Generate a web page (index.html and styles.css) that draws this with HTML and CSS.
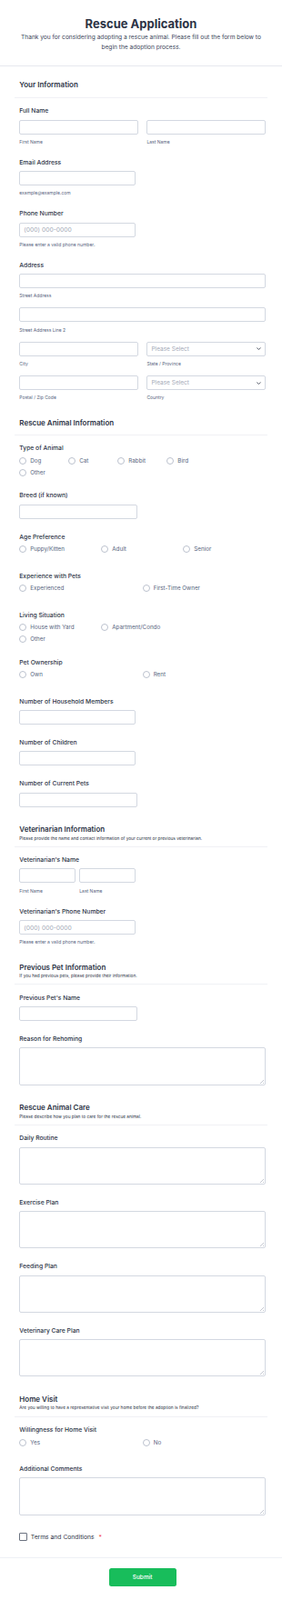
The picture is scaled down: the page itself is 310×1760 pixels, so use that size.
FILE: index.html
```html
<!DOCTYPE html>
<html lang="en">
<head>
    <meta charset="UTF-8">
    <meta name="viewport" content="width=device-width, initial-scale=1.0">
    <title>Rescue Application</title>
    <link rel="stylesheet" href="styles.css">
</head>
<body>
    <form class="form">
        <div class="header">
            <h1>Rescue Application</h1>
            <p>Thank you for considering adopting a rescue animal. Please fill out the form below to begin the adoption process.</p>
        </div>

        <!-- Your Information -->
        <div class="section first">
            <div class="section-head">
                <h2>Your Information</h2>
            </div>
            <div class="field">
                <label class="label">Full Name</label>
                <div class="row">
                    <div><input type="text"><span class="sublabel">First Name</span></div>
                    <div><input type="text"><span class="sublabel">Last Name</span></div>
                </div>
            </div>
            <div class="field">
                <label class="label">Email Address</label>
                <input type="text" class="w-md">
                <span class="sublabel">example@example.com</span>
            </div>
            <div class="field">
                <label class="label">Phone Number</label>
                <input type="text" class="w-md" placeholder="(000) 000-0000">
                <span class="sublabel">Please enter a valid phone number.</span>
            </div>
            <div class="field">
                <label class="label">Address</label>
                <div class="part"><input type="text"><span class="sublabel">Street Address</span></div>
                <div class="part"><input type="text"><span class="sublabel">Street Address Line 2</span></div>
                <div class="row part">
                    <div><input type="text"><span class="sublabel">City</span></div>
                    <div>
                        <div class="select-wrap">
                            <select><option>Please Select</option></select>
                            <svg class="chev" width="5" height="3" viewBox="0 0 5 3"><path d="M0.5 0.5 L2.5 2.5 L4.5 0.5" fill="none" stroke="#2c3345" stroke-width="0.8"/></svg>
                        </div>
                        <span class="sublabel">State / Province</span>
                    </div>
                </div>
                <div class="row">
                    <div><input type="text"><span class="sublabel">Postal / Zip Code</span></div>
                    <div>
                        <div class="select-wrap">
                            <select><option>Please Select</option></select>
                            <svg class="chev" width="5" height="3" viewBox="0 0 5 3"><path d="M0.5 0.5 L2.5 2.5 L4.5 0.5" fill="none" stroke="#2c3345" stroke-width="0.8"/></svg>
                        </div>
                        <span class="sublabel">Country</span>
                    </div>
                </div>
            </div>
        </div>

        <!-- Rescue Animal Information -->
        <div class="section">
            <div class="section-head">
                <h2>Rescue Animal Information</h2>
            </div>
            <div class="field">
                <label class="label">Type of Animal</label>
                <div class="choices cols-animal">
                    <label class="choice"><input type="radio" name="animal">Dog</label>
                    <label class="choice"><input type="radio" name="animal">Cat</label>
                    <label class="choice"><input type="radio" name="animal">Rabbit</label>
                    <label class="choice"><input type="radio" name="animal">Bird</label>
                    <label class="choice"><input type="radio" name="animal">Other</label>
                </div>
            </div>
            <div class="field">
                <label class="label">Breed (if known)</label>
                <input type="text" class="w-lg">
            </div>
            <div class="field">
                <label class="label">Age Preference</label>
                <div class="choices cols-3">
                    <label class="choice"><input type="radio" name="age">Puppy/Kitten</label>
                    <label class="choice"><input type="radio" name="age">Adult</label>
                    <label class="choice"><input type="radio" name="age">Senior</label>
                </div>
            </div>
            <div class="field">
                <label class="label">Experience with Pets</label>
                <div class="choices cols-2">
                    <label class="choice"><input type="radio" name="exp">Experienced</label>
                    <label class="choice"><input type="radio" name="exp">First-Time Owner</label>
                </div>
            </div>
            <div class="field">
                <label class="label">Living Situation</label>
                <div class="choices cols-living">
                    <label class="choice"><input type="radio" name="living">House with Yard</label>
                    <label class="choice"><input type="radio" name="living">Apartment/Condo</label>
                    <label class="choice"><input type="radio" name="living">Other</label>
                </div>
            </div>
            <div class="field">
                <label class="label">Pet Ownership</label>
                <div class="choices cols-2">
                    <label class="choice"><input type="radio" name="own">Own</label>
                    <label class="choice"><input type="radio" name="own">Rent</label>
                </div>
            </div>
            <div class="field">
                <label class="label">Number of Household Members</label>
                <input type="text" class="w-md">
            </div>
            <div class="field">
                <label class="label">Number of Children</label>
                <input type="text" class="w-md">
            </div>
            <div class="field">
                <label class="label">Number of Current Pets</label>
                <input type="text" class="w-lg">
            </div>
        </div>

        <!-- Veterinarian Information -->
        <div class="section">
            <div class="section-head with-desc">
                <h2>Veterinarian Information</h2>
                <p>Please provide the name and contact information of your current or previous veterinarian.</p>
            </div>
            <div class="field">
                <label class="label">Veterinarian's Name</label>
                <div class="row row-small">
                    <div><input type="text"><span class="sublabel">First Name</span></div>
                    <div><input type="text"><span class="sublabel">Last Name</span></div>
                </div>
            </div>
            <div class="field">
                <label class="label">Veterinarian's Phone Number</label>
                <input type="text" class="w-md" placeholder="(000) 000-0000">
                <span class="sublabel">Please enter a valid phone number.</span>
            </div>
        </div>

        <!-- Previous Pet Information -->
        <div class="section">
            <div class="section-head with-desc">
                <h2>Previous Pet Information</h2>
                <p>If you had previous pets, please provide their information.</p>
            </div>
            <div class="field">
                <label class="label">Previous Pet's Name</label>
                <input type="text" class="w-lg">
            </div>
            <div class="field">
                <label class="label">Reason for Rehoming</label>
                <div class="area"><textarea></textarea></div>
            </div>
        </div>

        <!-- Rescue Animal Care -->
        <div class="section">
            <div class="section-head with-desc">
                <h2>Rescue Animal Care</h2>
                <p>Please describe how you plan to care for the rescue animal.</p>
            </div>
            <div class="field">
                <label class="label">Daily Routine</label>
                <div class="area"><textarea></textarea></div>
            </div>
            <div class="field">
                <label class="label">Exercise Plan</label>
                <div class="area"><textarea></textarea></div>
            </div>
            <div class="field">
                <label class="label">Feeding Plan</label>
                <div class="area"><textarea></textarea></div>
            </div>
            <div class="field">
                <label class="label">Veterinary Care Plan</label>
                <div class="area"><textarea></textarea></div>
            </div>
        </div>

        <!-- Home Visit -->
        <div class="section">
            <div class="section-head with-desc">
                <h2>Home Visit</h2>
                <p>Are you willing to have a representative visit your home before the adoption is finalized?</p>
            </div>
            <div class="field">
                <label class="label">Willingness for Home Visit</label>
                <div class="choices cols-2">
                    <label class="choice"><input type="radio" name="visit">Yes</label>
                    <label class="choice"><input type="radio" name="visit">No</label>
                </div>
            </div>
            <div class="field">
                <label class="label">Additional Comments</label>
                <div class="area"><textarea></textarea></div>
            </div>
            <div class="field terms">
                <label class="check"><input type="checkbox">Terms and Conditions <span class="req">*</span></label>
            </div>
        </div>

        <div class="footer">
            <button type="button" class="btn-submit">Submit</button>
        </div>
    </form>
</body>
</html>
```

FILE: styles.css
```css
* {
    box-sizing: border-box;
}
body {
    margin: 0;
    background: #fff;
    font-family: Inter, "Noto Sans", sans-serif;
    color: #2c3345;
}
.form {
    width: 310px;
}
.header {
    padding: 17.7px 17px 14.4px;
    border-bottom: 1px solid #e6e8ee;
    text-align: center;
}
.header h1 {
    margin: 0;
    font-size: 13px;
    line-height: 16px;
    font-weight: 700;
}
.header p {
    margin: 2.7px 0 0;
    font-size: 6.6px;
    line-height: 10.6px;
    color: #3b4559;
}
.section {
    padding: 0 16px;
}
.section-head {
    padding: 13.8px 0 8.5px 5.3px;
    border-bottom: 1px solid #f0f1f5;
}
.section.first .section-head {
    padding-top: 15.3px;
}
.section-head.with-desc {
    padding-bottom: 6.1px;
}
.section-head h2 {
    margin: 0;
    font-size: 8px;
    line-height: 10px;
    font-weight: 600;
}
.section-head p {
    margin: 1.7px 0 0;
    font-size: 4.75px;
    line-height: 6px;
}
.field {
    padding: 9.25px 2px 5.5px 5.3px;
}
.label {
    display: block;
    margin-bottom: 5.5px;
    font-size: 6.75px;
    line-height: 9px;
    font-weight: 500;
}
.sublabel {
    display: block;
    margin-top: 5.3px;
    font-size: 5px;
    line-height: 6px;
    color: #57647e;
}
.part {
    margin-bottom: 10px;
}
.row {
    display: grid;
    grid-template-columns: 1fr 1fr;
    column-gap: 9.6px;
}
.row-small {
    grid-template-columns: 62px 61.4px;
    column-gap: 4px;
}
input[type="text"], select, textarea {
    display: block;
    width: 100%;
    height: 16px;
    margin: 0;
    padding: 0 4px;
    border: 1px solid #d3d8e1;
    border-radius: 2px;
    background: #fff;
    font-family: inherit;
    font-size: 6.75px;
    color: #2c3345;
}
input::placeholder {
    color: #a4aab8;
}
.w-md {
    width: 127.4px !important;
}
.w-lg {
    width: 129.4px !important;
}
.area {
    position: relative;
}
.area::after {
    content: "";
    position: absolute;
    right: 2px;
    bottom: 2px;
    width: 4px;
    height: 4px;
    background: linear-gradient(135deg, transparent 0 48%, #c4c8d1 48% 60%, transparent 60% 76%, #c4c8d1 76% 88%, transparent 88%);
}
textarea {
    height: 41.3px;
    padding: 4px;
    resize: none;
}
.select-wrap {
    position: relative;
}
select {
    appearance: none;
    -webkit-appearance: none;
    font-size: 6.5px;
    color: #a4aab8;
}
.chev {
    position: absolute;
    right: 5px;
    top: 6.5px;
}
.choices {
    display: grid;
    row-gap: 4px;
    min-height: 13px;
    margin: -0.25px 0 1px;
    align-content: start;
}
.cols-animal {
    grid-template-columns: repeat(4, 54px);
}
.cols-3 {
    grid-template-columns: repeat(3, 90px);
}
.cols-living {
    grid-template-columns: repeat(2, 90px);
}
.cols-2 {
    grid-template-columns: repeat(2, 135.4px);
}
.choice, .check {
    display: flex;
    align-items: center;
    gap: 4px;
    height: 9px;
    font-size: 6.25px;
    color: #57647e;
}
.choice input {
    appearance: none;
    -webkit-appearance: none;
    flex: none;
    width: 8px;
    height: 8px;
    margin: 0;
    border: 1px solid #bcc2ce;
    border-radius: 50%;
    background: #fff;
}
.field.terms {
    padding-top: 14px;
    padding-bottom: 17.9px;
}
.check {
    font-size: 6.75px;
    color: #2c3345;
}
.check input {
    appearance: none;
    -webkit-appearance: none;
    flex: none;
    width: 8.5px;
    height: 8.5px;
    margin: 0;
    border: 1px solid #6b7280;
    border-radius: 1px;
    background: #fff;
}
.req {
    margin-left: 1px;
    color: #f23a3c;
}
.footer {
    padding: 11.5px 18px 16px 21.3px;
    border-top: 1px solid #eef0f5;
}
.btn-submit {
    display: block;
    width: 74px;
    height: 20px;
    margin: 0 auto;
    border: none;
    border-radius: 2.5px;
    background: #18bd5b;
    color: #fff;
    font-family: inherit;
    font-size: 6.5px;
    font-weight: 500;
}
```
